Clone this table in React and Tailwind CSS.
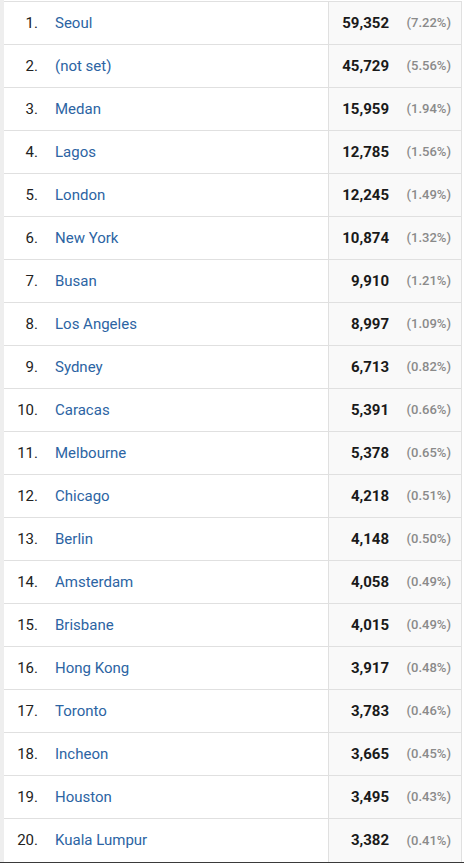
import React from "react";

const rows = [
  ["Seoul", "59,352", "7.22%"],
  ["(not set)", "45,729", "5.56%"],
  ["Medan", "15,959", "1.94%"],
  ["Lagos", "12,785", "1.56%"],
  ["London", "12,245", "1.49%"],
  ["New York", "10,874", "1.32%"],
  ["Busan", "9,910", "1.21%"],
  ["Los Angeles", "8,997", "1.09%"],
  ["Sydney", "6,713", "0.82%"],
  ["Caracas", "5,391", "0.66%"],
  ["Melbourne", "5,378", "0.65%"],
  ["Chicago", "4,218", "0.51%"],
  ["Berlin", "4,148", "0.50%"],
  ["Amsterdam", "4,058", "0.49%"],
  ["Brisbane", "4,015", "0.49%"],
  ["Hong Kong", "3,917", "0.48%"],
  ["Toronto", "3,783", "0.46%"],
  ["Incheon", "3,665", "0.45%"],
  ["Houston", "3,495", "0.43%"],
  ["Kuala Lumpur", "3,382", "0.41%"],
];

export default function App() {
  return (
    <div
      className="w-[464px] h-[863px] bg-white flex flex-col overflow-hidden"
      style={{ fontFamily: "Roboto, 'Liberation Sans', sans-serif" }}
    >
      <div className="flex flex-1">
        <div className="w-[4px] bg-[#eeeeee]" />
        <div className="w-[458px] flex flex-col border-t border-[#e0e0e0] mt-[1px]">
          {rows.map(([city, num, pct], i) => (
            <div
              key={city}
              className="flex h-[43px] border-b border-[#e0e0e0] last:border-b-0"
            >
              <div className="w-[42px] pr-[8px] text-right text-[15px] text-[#222] flex items-center justify-end">
                {i + 1}.
              </div>
              <div className="flex-1 pl-[9px] flex items-center text-[15px] text-[#2c64a3] border-r border-[#e0e0e0]">
                {city}
              </div>
              <div className="w-[133px] bg-[#f9f9f9] border-r border-[#e0e0e0] flex items-center justify-end pr-[10px]">
                <span className="text-[15px] font-bold text-[#1a1a1a]">{num}</span>
                <span className="w-[62px] text-right text-[13px] font-medium text-[#8a8a8a]">
                  ({pct})
                </span>
              </div>
            </div>
          ))}
        </div>
        <div className="flex-1 bg-white" />
      </div>
      <div className="h-[3px] bg-[#3a3a3a]" />
    </div>
  );
}
